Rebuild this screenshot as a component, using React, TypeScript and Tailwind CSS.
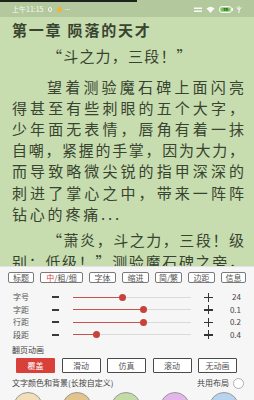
import React from 'react';

const tabs = [
  { label: '标题', w: 'w-[26px]' },
  { label: 'mix', w: 'w-[43px]' },
  { label: '字体', w: 'w-[27px]' },
  { label: '缩进', w: 'w-[27px]' },
  { label: '简/繁', w: 'w-[27px]' },
  { label: '边距', w: 'w-[27px]' },
  { label: '信息', w: 'w-[25px]' },
];

const sliders = [
  { label: '字号', value: '24', pct: 42 },
  { label: '字距', value: '0.1', pct: 60 },
  { label: '行距', value: '0.2', pct: 60 },
  { label: '段距', value: '0.4', pct: 20 },
];

const anims = ['覆盖', '滑动', '仿真', '滚动', '无动画'];

const swatches = ['bg-[#f2dfb9]', 'bg-[#e2c48c]', 'bg-[#c3dca5]', 'bg-[#e3b6ea]', 'bg-[#b7d3ee]'];

function StatusBar() {
  return (
    <div className="flex flex-col bg-[#b3c99d] shrink-0">
      <div className="flex h-[2px]">
        <div className="w-[137px] bg-[#1e221c]" />
      </div>
      <div className="flex h-[15px] items-center px-[12px] text-white">
        <span className="text-[7px] leading-none font-['Noto_Sans_CJK_SC',sans-serif] opacity-90">上午11:15</span>
        <span className="ml-[4px] w-[4px] h-[5px] rounded-full border border-white/80" />
        <span className="ml-[5px] w-[5px] h-[5px] rounded-full bg-[#f2b233]" />
        <span className="ml-[3px] text-[7px] leading-none opacity-80">···</span>
        <div className="flex-1" />
        {/* sim */}
        <svg width="8" height="6" viewBox="0 0 8 6" className="opacity-90">
          <rect x="0" y="0.5" width="8" height="1.5" fill="white" />
          <rect x="0" y="3.5" width="8" height="1.5" fill="white" />
        </svg>
        {/* wifi */}
        <svg width="9" height="7" viewBox="0 0 9 7" className="ml-[4px] opacity-90">
          <path d="M0.5 2.5 Q4.5 -0.8 8.5 2.5 L4.5 7 Z" fill="white" />
        </svg>
        {/* battery */}
        <div className="ml-[4px] flex items-center">
          <div className="w-[13px] h-[7px] rounded-[3px] border border-white/90 p-[1px] flex">
            <div className="flex-1 rounded-[2px] bg-[#5fcf43] flex items-center justify-center text-[4px] leading-none text-[#1f4a14] font-bold">19</div>
          </div>
          <div className="w-[1px] h-[3px] bg-white/90" />
        </div>
        <svg width="6" height="7" viewBox="0 0 6 7" className="ml-[3px] opacity-90">
          <path d="M3 0 V7 M0.5 1.5 L3 3.5 L5.5 1.5" stroke="white" strokeWidth="1" fill="none" />
        </svg>
      </div>
    </div>
  );
}

function Reader() {
  const just = 'whitespace-nowrap text-justify [text-align-last:justify]';
  return (
    <div className="flex-1 overflow-hidden px-[12px] pt-[2px] text-[#38442f] font-['Noto_Sans_CJK_SC',sans-serif]">
      <div className="text-[15px] leading-[21px] font-bold tracking-[1.8px] whitespace-nowrap">第一章 陨落的天才</div>
      <div className="mt-[5px] pl-[35px] text-[15px] leading-[21px] tracking-[1.2px] whitespace-nowrap">“斗之力，三段！”</div>
      <div className="mt-[9.5px] text-[15px] leading-[21.2px] w-[232px]">
        <div className={`pl-[35px] ${just}`}>望着测验魔石碑上面闪亮</div>
        <div className={just}>得甚至有些刺眼的五个大字，</div>
        <div className={just}>少年面无表情，唇角有着一抹</div>
        <div className={just}>自嘲，紧握的手掌，因为大力，</div>
        <div className={just}>而导致略微尖锐的指甲深深的</div>
        <div className={just}>刺进了掌心之中，带来一阵阵</div>
        <div className="whitespace-nowrap tracking-[2.8px]">钻心的疼痛...</div>
      </div>
      <div className="mt-[5.5px] text-[15px] leading-[21.2px] w-[232px]">
        <div className={`pl-[35px] ${just}`}>“萧炎，斗之力，三段！级</div>
        <div className={just}>别：低级！”测验魔石碑之旁，</div>
      </div>
    </div>
  );
}

function Panel() {
  return (
    <div className="h-[134px] shrink-0 bg-[#f6f6f6] border-t border-[#e2e2e2] text-[8px] leading-none text-[#555] font-['Noto_Sans_CJK_SC',sans-serif]">
      <div className="mt-[5px] flex justify-between px-[8px]">
        {tabs.map((t) => (
          <div
            key={t.label}
            className={`${t.w} h-[11px] flex items-center justify-center border border-[#7a7a7a] rounded-[2px] bg-white`}
          >
            {t.label === 'mix' ? (
              <span>
                <span className="text-[#d9413a]">中</span>/粗/细
              </span>
            ) : (
              t.label
            )}
          </div>
        ))}
      </div>

      <div className="mt-[8px] flex flex-col">
        {sliders.map((s) => (
          <div key={s.label} className="h-[12.5px] flex items-center pl-[13px]">
            <span className="w-[39px]">{s.label}</span>
            <div className="w-[7px] h-[1.6px] bg-[#3a3a3a]" />
            <div className="ml-[14px] w-[118px] h-[1px] bg-[#dadada] relative">
              <div className="h-full bg-[#c9534c]" style={{ width: `${s.pct}%` }} />
              <div
                className="absolute top-1/2 w-[7px] h-[7px] -ml-[3.5px] -mt-[3.5px] rounded-full bg-[#c8413b]"
                style={{ left: `${s.pct}%` }}
              />
            </div>
            <div className="ml-[13px] w-[9px] h-[9px] relative flex items-center justify-center">
              <div className="w-[9px] h-[1.5px] bg-[#333]" />
              <div className="absolute w-[1.5px] h-[9px] bg-[#333]" />
            </div>
            <span className="flex-1 text-right pr-[13px] text-[#444]">{s.value}</span>
          </div>
        ))}
      </div>

      <div className="mt-[4px] h-[10px] flex items-center pl-[12px] text-[#444]">翻页动画</div>

      <div className="mt-[3px] flex gap-[6.5px] px-[16px]">
        {anims.map((a, i) => (
          <div
            key={a}
            className={
              i === 0
                ? 'w-[39px] h-[15px] flex items-center justify-center rounded-[1px] bg-[#d8403a] text-white'
                : 'w-[39px] h-[15px] flex items-center justify-center rounded-[1px] border border-[#4a4a4a] bg-white text-[#555]'
            }
          >
            {a}
          </div>
        ))}
      </div>

      <div className="mt-[5px] h-[10px] flex items-center pl-[12px] pr-[10px] text-[#444]">
        <span>文字颜色和背景(长按自定义)</span>
        <div className="flex-1" />
        <span>共用布局</span>
        <div className="ml-[4px] w-[11px] h-[11px] rounded-full border border-[#b0b0b0] bg-white" />
      </div>

      <div className="mt-[4px] flex gap-[19px] px-[13px]">
        {swatches.map((c) => (
          <div key={c} className={`w-[30px] h-[30px] shrink-0 rounded-full border border-[#9a9a9a] ${c}`} />
        ))}
      </div>
    </div>
  );
}

export default function App() {
  return (
    <div className="w-[254px] h-[400px] overflow-hidden flex flex-col bg-[#c7ddb0]">
      <StatusBar />
      <Reader />
      <Panel />
    </div>
  );
}
